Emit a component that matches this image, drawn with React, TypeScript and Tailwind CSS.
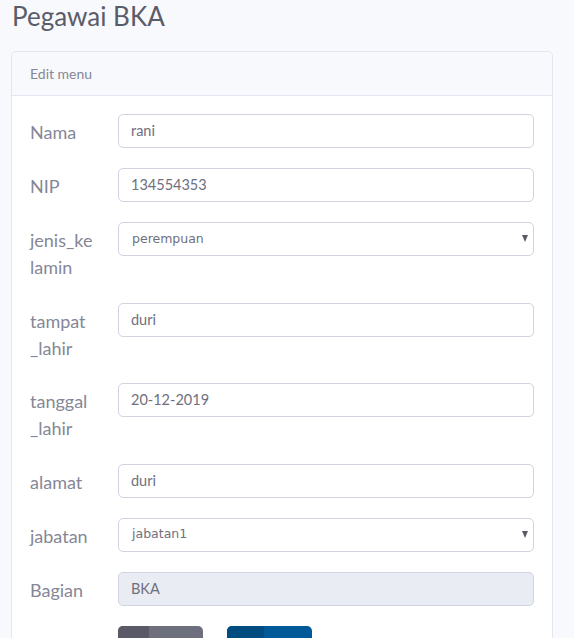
import React from 'react';
import { FaArrowLeft, FaSave } from 'react-icons/fa';

type Field = {
  label: string[];
  value: string;
  kind?: 'input' | 'select' | 'disabled';
};

const fields: Field[] = [
  { label: ['Nama'], value: 'rani' },
  { label: ['NIP'], value: '134554353' },
  { label: ['jenis_ke', 'lamin'], value: 'perempuan', kind: 'select' },
  { label: ['tampat', '_lahir'], value: 'duri' },
  { label: ['tanggal', '_lahir'], value: '20-12-2019' },
  { label: ['alamat'], value: 'duri' },
  { label: ['jabatan'], value: 'jabatan1', kind: 'select' },
  { label: ['Bagian'], value: 'BKA', kind: 'disabled' },
];

const FormRow: React.FC<{ field: Field }> = ({ field }) => {
  const { label, value, kind = 'input' } = field;

  return (
    <div className="flex items-start">
      <label className="w-[88px] shrink-0 pt-[5px] pb-[1.5px] text-[18px] leading-[27px] text-[#858796]">
        {label.map((line) => (
          <span key={line} className="block">
            {line}
          </span>
        ))}
      </label>
      {kind === 'select' ? (
        <div className="relative flex-1">
          <div className="flex h-[34px] items-center rounded-[5px] border border-[#d1d3e2] bg-white pl-[13px] font-['DejaVu_Sans',sans-serif] text-[12.5px] text-[#6e707e]">
            {value}
          </div>
          <span className="absolute right-[6px] top-[13px] h-0 w-0 border-x-[3.5px] border-t-[7px] border-x-transparent border-t-[#5a5c69]" />
        </div>
      ) : (
        <div
          className={`flex h-[34px] flex-1 items-center rounded-[5px] border border-[#d1d3e2] px-[12px] text-[14.5px] text-[#6e707e] ${
            kind === 'disabled' ? 'bg-[#eaecf4]' : 'bg-white'
          }`}
        >
          {value}
        </div>
      )}
    </div>
  );
};

const App: React.FC = () => {
  return (
    <div className="min-h-screen bg-[#f8f9fc] font-['Lato',sans-serif]">
      <h1 className="px-[12px] pt-[1px] text-[26px] leading-[30px] font-normal text-[#5a5c69]">Pegawai BKA</h1>

      <div className="ml-[11px] mt-[20px] w-[542px] rounded-[5px] border border-[#e3e6f0] bg-white">
        <div className="flex h-[44px] items-center rounded-t-[5px] border-b border-[#e3e6f0] bg-[#f8f9fc] px-[18px] text-[14px] text-[#858796]">
          Edit menu
        </div>

        <div className="flex flex-col gap-[20px] px-[18px] pt-[18px] pb-[20px]">
          {fields.map((field) => (
            <FormRow key={field.label.join('')} field={field} />
          ))}

          <div className="flex gap-[24px] pl-[88px]">
            <button className="flex h-[38px] w-[85px] overflow-hidden rounded-[5px] bg-[#6e6f7d] text-[14px] text-white">
              <span className="flex w-[31px] items-center justify-center bg-[#5a5a66]">
                <FaArrowLeft className="text-[12px]" />
              </span>
              <span className="flex flex-1 items-center justify-center">Kembali</span>
            </button>
            <button className="flex h-[38px] w-[85px] overflow-hidden rounded-[5px] bg-[#005a99] text-[14px] text-white">
              <span className="flex w-[37px] items-center justify-center bg-[#004b80]">
                <FaSave className="text-[12px]" />
              </span>
              <span className="flex flex-1 items-center justify-center">Simpan</span>
            </button>
          </div>
        </div>
      </div>
    </div>
  );
};

export default App;
